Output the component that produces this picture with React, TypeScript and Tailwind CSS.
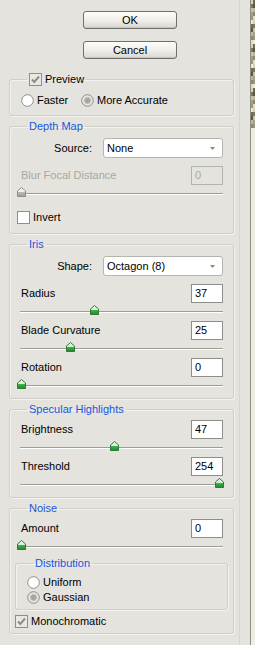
import React from "react";

const FONT = "font-['Liberation_Sans',Arial,sans-serif]";

function Btn({ label }: { label: string }) {
  return (
    <button className="ml-[74px] flex h-[18px] w-[94px] items-center justify-center rounded-[3px] border border-[#707070] bg-linear-to-b from-[#fdfdfb] via-[#f0efea] to-[#d8d7d0] text-[11px] leading-none text-black shadow-[inset_0_-1px_0_#c5c4bd]">
      {label}
    </button>
  );
}

function Check({ checked, label }: { checked?: boolean; label: string }) {
  return (
    <span className="flex h-[13px] items-center gap-[3px] text-[11px] leading-none text-black">
      <svg width="13" height="13" viewBox="0 0 13 13" className="shrink-0">
        <rect x="0.5" y="0.5" width="12" height="12" fill={checked ? "#e9e8e4" : "#ffffff"} stroke="#8f8e8a" />
        {checked && <path d="M3 6.5 L5.3 9 L10 3.5" fill="none" stroke="#8e8e8c" strokeWidth="2" />}
      </svg>
      {label}
    </span>
  );
}

function Radio({ checked, label }: { checked?: boolean; label: string }) {
  return (
    <span className="flex h-[13px] items-center gap-[3px] text-[11px] leading-none text-black">
      <svg width="13" height="13" viewBox="0 0 13 13" className="shrink-0">
        <circle cx="6.5" cy="6.5" r="5.8" fill={checked ? "#e6e5e1" : "#ffffff"} stroke="#8f8e8a" />
        {checked && <circle cx="6.5" cy="6.5" r="3" fill="#a5a5a2" stroke="#b9b9b6" />}
      </svg>
      {label}
    </span>
  );
}

function Field({ value, disabled }: { value: string; disabled?: boolean }) {
  return (
    <div
      className={`flex h-[19px] w-[32px] items-center border pl-[3px] text-[11px] leading-none ${
        disabled ? "border-[#b4b3ae] bg-transparent text-[#aaa9a4]" : "border-[#8d8d8a] bg-white text-black"
      }`}
    >
      {value}
    </div>
  );
}

function Dropdown({ label, value }: { label: string; value: string }) {
  return (
    <div className="flex h-[20px] items-center justify-end">
      <span className="mr-[11px] text-[11px] leading-none text-black">{label}</span>
      <div className="flex h-[20px] w-[120px] items-center justify-between rounded-[3px] border border-[#b7b5af] bg-white pl-[3px] pr-[7px] text-[11px] leading-none text-black">
        {value}
        <svg width="5" height="3" viewBox="0 0 5 3">
          <path d="M0 0 H5 L2.5 3 Z" fill="#8a8a88" />
        </svg>
      </div>
    </div>
  );
}

function Slider({ value, max, disabled }: { value: number; max: number; disabled?: boolean }) {
  const left = 1 + (value / max) * 199 - 4.5;
  const gid = disabled ? "thumb-off" : "thumb-on";
  return (
    <div className="relative h-[18px] pt-[8px]">
      <div className="h-px rounded-full bg-[#9d9c97]" />
      <div className="h-px bg-white" />
      <svg width="9" height="10" viewBox="0 0 9 10" className="absolute top-[2px]" style={{ left }}>
        <defs>
          <linearGradient id={gid} x1="0" y1="0" x2="0" y2="1">
            <stop offset="0" stopColor={disabled ? "#fafafa" : "#e8f6e8"} />
            <stop offset="0.45" stopColor={disabled ? "#f0f0f0" : "#d5efd6"} />
            <stop offset="0.55" stopColor={disabled ? "#b8b8b5" : "#3cae4a"} />
            <stop offset="1" stopColor={disabled ? "#9e9e9b" : "#1f8a2f"} />
          </linearGradient>
        </defs>
        <path d="M4.5 0.5 L8.5 4 V9.5 H0.5 V4 Z" fill={`url(#${gid})`} stroke={disabled ? "#8c8c89" : "#2f7a35"} />
      </svg>
    </div>
  );
}

function Group({ legend, children, className = "" }: { legend: React.ReactNode; children: React.ReactNode; className?: string }) {
  return (
    <fieldset className={`rounded-[3px] border border-[#d0cec7] shadow-[inset_1px_1px_0_#f3f2ee,1px_1px_0_#f3f2ee] ${className}`}>
      <legend className="ml-[17px] flex h-[13px] items-center px-[2px] text-[11px] leading-none text-[#1a56de]">{legend}</legend>
      {children}
    </fieldset>
  );
}

function Row({ label, value, disabled }: { label: string; value: string; disabled?: boolean }) {
  return (
    <div className="flex h-[19px] items-center justify-between">
      <span className={`pl-px text-[11px] leading-none ${disabled ? "text-[#a9a8a3]" : "text-black"}`}>{label}</span>
      <Field value={value} disabled={disabled} />
    </div>
  );
}

const strip = Array.from({ length: 64 }, (_, i) => {
  const s = (i * 73 + 17) % 11;
  const tones = ["#8d8872", "#c9c2a4", "#6f6b5c", "#e2dcc4", "#a59f86", "#57544a", "#d6cfb2", "#9a957e", "#bdb597", "#7b7765", "#efe9d2"];
  return tones[s];
});

export default function App() {
  return (
    <div className={`flex h-[645px] w-[255px] overflow-hidden bg-[#e4e3de] ${FONT}`}>
      <div className="flex w-[240px] flex-col border-r border-[#d8d6d0] pl-[9px]">
        <div className="mt-[11px]">
          <Btn label="OK" />
        </div>
        <div className="mt-[12px]">
          <Btn label="Cancel" />
        </div>

        <div className="mt-[14px] flex w-[225px] flex-col gap-[4px]">
          <Group legend={<Check checked label="Preview" />}>
            <div className="flex pl-[11px] pt-[8px] pb-[8px]">
              <div className="w-[60px]">
                <Radio label="Faster" />
              </div>
              <Radio checked label="More Accurate" />
            </div>
          </Group>

          <Group legend="Depth Map">
            <div className="px-[10px] pt-[5px] pb-[9px]">
              <Dropdown label="Source:" value="None" />
              <div className="mt-[8px]">
                <Row label="Blur Focal Distance" value="0" disabled />
              </div>
              <Slider value={0} max={100} disabled />
              <div className="mt-[8px] -ml-[3px]">
                <Check label="Invert" />
              </div>
            </div>
          </Group>

          <Group legend="Iris">
            <div className="px-[10px] pt-[5px] pb-[3px]">
              <Dropdown label="Shape:" value="Octagon (8)" />
              <div className="mt-[8px]">
                <Row label="Radius" value="37" />
              </div>
              <Slider value={37} max={100} />
              <Row label="Blade Curvature" value="25" />
              <Slider value={25} max={100} />
              <Row label="Rotation" value="0" />
              <Slider value={0} max={360} />
            </div>
          </Group>

          <Group legend="Specular Highlights">
            <div className="px-[10px] pt-[4px] pb-[3px]">
              <Row label="Brightness" value="47" />
              <Slider value={47} max={100} />
              <Row label="Threshold" value="254" />
              <Slider value={254} max={255} />
            </div>
          </Group>

          <Group legend="Noise">
            <div className="px-[10px] pt-[4px] pb-[5px]">
              <Row label="Amount" value="0" />
              <Slider value={0} max={100} />
              <Group legend="Distribution" className="-mx-[5px] mt-[1px]">
                <div className="flex flex-col gap-[2px] pl-[11px] pt-[6px] pb-[5px]">
                  <Radio label="Uniform" />
                  <Radio checked label="Gaussian" />
                </div>
              </Group>
              <div className="-ml-[5px] mt-[5px]">
                <Check checked label="Monochromatic" />
              </div>
            </div>
          </Group>
        </div>
      </div>

      <div className="w-[10px]" />
      <div className="w-px bg-[#8f8d87]" />
      <div className="flex w-[4px] flex-col bg-[#f0ede3]">
        <svg width="4" height="128" viewBox="0 0 4 128">
          {strip.map((c, i) => (
            <rect key={i} x={(i % 2) * 2} y={Math.floor(i / 2) * 4} width="2" height="4" fill={c} />
          ))}
        </svg>
      </div>
    </div>
  );
}
